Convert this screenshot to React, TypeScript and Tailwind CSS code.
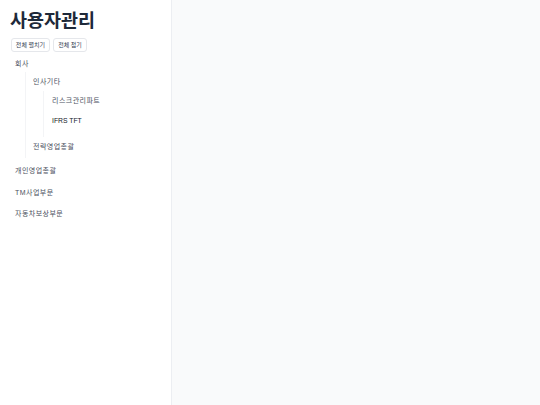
import type { ReactNode } from "react";

const font = { fontFamily: '"Liberation Sans", "Noto Sans CJK KR", sans-serif' };

function Row({ label, className = "" }: { label: string; className?: string }) {
  return (
    <div className={`h-[20px] flex items-center text-[7px] tracking-[0.45px] text-[#4b5060] ${className}`}>
      {label}
    </div>
  );
}

function Children({ children, className = "" }: { children: ReactNode; className?: string }) {
  return (
    <div className={`ml-[10px] border-l border-gray-100 ${className}`}>
      {children}
    </div>
  );
}

export default function App() {
  return (
    <div className="flex h-[405px] w-[540px] bg-[#f9fafb]" style={font}>
      <aside className="w-[172px] h-full bg-white border-r border-[#eceef2] flex flex-col">
        <h1 className="pl-[10px] pt-[8px] text-[18.5px] leading-[26px] font-bold text-gray-800">
          사용자관리
        </h1>
        <div className="flex gap-[3px] pl-[11px] mt-[4px]">
          <button
            type="button"
            className="h-[14px] w-[39px] justify-center rounded-[3px] border border-gray-200 bg-white text-[6px] text-gray-700 flex items-center"
          >
            전체 펼치기
          </button>
          <button
            type="button"
            className="h-[14px] w-[34px] justify-center rounded-[3px] border border-gray-200 bg-white text-[6px] text-gray-700 flex items-center"
          >
            전체 접기
          </button>
        </div>
        <div className="pl-[15px] mt-[2px]">
          <Row label="회사" />
          <Children className="mt-[-2px] pl-[7px] pb-[1px]">
            <Row label="인사기타" />
            <Children className="mt-[-1px] pl-[8px] pb-[6px]">
              <Row label="리스크관리파트" />
              <Row label="IFRS TFT" className="!text-[6.8px] !tracking-normal !text-gray-900" />
            </Children>
            <Row label="전략영업총괄" />
          </Children>
          <Row label="개인영업총괄" className="mt-[3px]" />
          <Row label="TM사업부문" className="mt-[2px]" />
          <Row label="자동차보상부문" className="mt-[1px]" />
        </div>
      </aside>
      <main className="flex-1" />
    </div>
  );
}
